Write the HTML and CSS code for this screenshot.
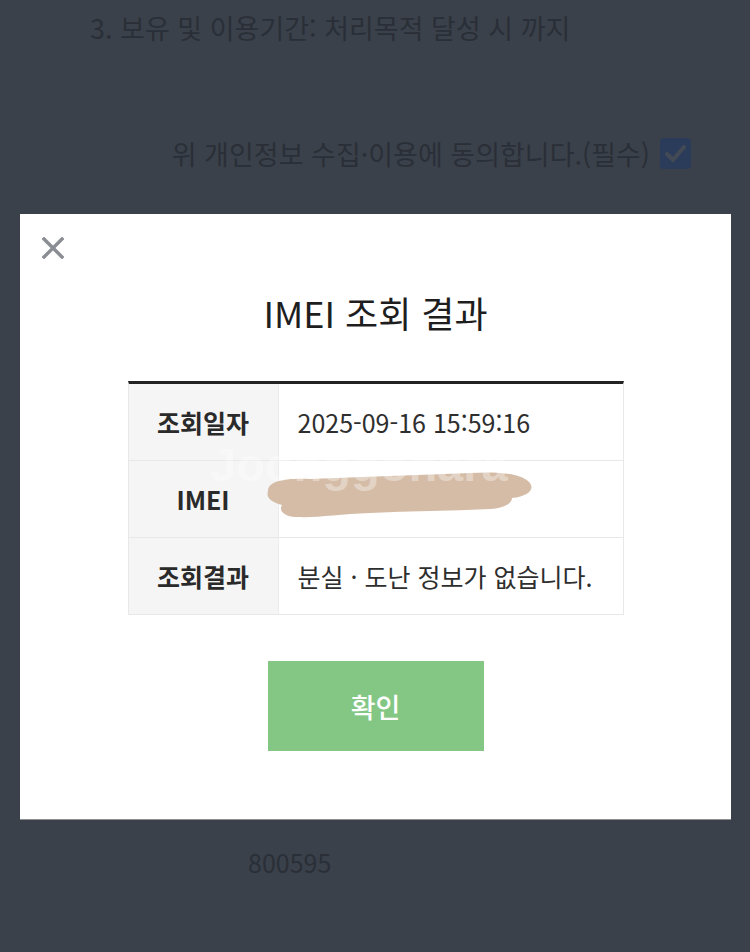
FILE: index.html
```html
<!DOCTYPE html>
<html lang="ko">
<head>
<meta charset="utf-8">
<title>IMEI 조회 결과</title>
<link rel="stylesheet" href="styles.css">
</head>
<body>
<div class="page">
  <p class="line1">3. 보유 및 이용기간: 처리목적 달성 시 까지</p>
  <div class="agree">
    <span>위 개인정보 수집·이용에 동의합니다.(필수)</span>
    <span class="check">
      <svg width="31" height="31" viewBox="0 0 31 31"><path d="M7 16 L13 22 L24 9" fill="none" stroke="#434a55" stroke-width="4" stroke-linecap="round" stroke-linejoin="round"/></svg>
    </span>
  </div>
  <p class="code">800595</p>
</div>

<div class="modal">
  <button class="close" aria-label="닫기">
    <svg width="22" height="22" viewBox="0 0 22 22"><path d="M2 2 L20 20 M20 2 L2 20" stroke="#8a8d92" stroke-width="3.4" stroke-linecap="square"/></svg>
  </button>
  <h1 class="title">IMEI 조회 결과</h1>
  <div class="result">
    <div class="label">조회일자</div>
    <div class="value">2025-09-16 15:59:16</div>
    <div class="label">IMEI</div>
    <div class="value imei"></div>
    <div class="label">조회결과</div>
    <div class="value">분실 · 도난 정보가 없습니다.</div>
  </div>
  <button class="ok">확인</button>
  <svg class="scribble" width="750" height="952" viewBox="0 0 750 952">
    <path d="M268,491 C268,481 285,478 310,479 C360,477 420,475 470,473 C500,471 520,474 528,481 C536,488 530,496 512,498 C512,503 505,508 490,509 C450,511 410,511 370,513 C340,514 315,518 298,517 C285,517 278,511 282,505 C270,502 266,497 268,491 Z" fill="#d5bca7"/>
  </svg>
  <span class="watermark">Joonggonara</span>
</div>
</body>
</html>
```

FILE: styles.css
```css
* { box-sizing: border-box; }
html, body { margin: 0; padding: 0; }
body {
  width: 750px;
  height: 952px;
  overflow: hidden;
  background: #3a414b;
  font-family: "Noto Sans CJK KR", "Noto Sans", sans-serif;
  position: relative;
}
.page {
  color: #2a2f37;
  font-size: 27px;
}
.line1 {
  margin: 0;
  padding-left: 90px;
  line-height: 56px;
}
.agree {
  margin-top: 69px;
  height: 56px;
  display: flex;
  justify-content: flex-end;
  align-items: center;
  gap: 10px;
  padding-right: 59px;
}
.check {
  width: 31px;
  height: 31px;
  border-radius: 4px;
  background: #2b3c5a;
  display: flex;
}
.code {
  margin: 663px 0 0;
  padding-left: 248px;
  font-size: 25px;
  line-height: 36px;
}
.modal {
  position: absolute;
  left: 20px;
  top: 214px;
  width: 711px;
  height: 605px;
  background: #fff;
  box-shadow: 0 1px 0 #8f8f8f;
  padding-top: 73px;
}
.close {
  position: absolute;
  left: 22px;
  top: 23px;
  width: 22px;
  height: 22px;
  padding: 0;
  border: 0;
  background: none;
  display: flex;
}
.title {
  margin: 0;
  text-align: center;
  font-size: 36px;
  font-weight: 400;
  line-height: 50px;
  color: #1e1e1e;
}
.result {
  width: 496px;
  margin: 44px auto 0;
  display: grid;
  grid-template-columns: 150px 1fr;
  border-top: 3px solid #222;
  border-left: 1px solid #e8e8e8;
  border-right: 1px solid #e8e8e8;
}
.label, .value {
  height: 77px;
  border-bottom: 1px solid #e8e8e8;
  display: flex;
  align-items: center;
  font-size: 25px;
  color: #2a2a2a;
}
.label {
  justify-content: center;
  background: #f5f5f5;
  font-weight: 700;
  border-right: 1px solid #ececec;
}
.value {
  padding-left: 19px;
  color: #2e2e2e;
}
.ok {
  display: block;
  width: 216px;
  height: 90px;
  margin: 46px auto 0;
  border: 0;
  background: #84c785;
  color: #fff;
  font-family: inherit;
  font-size: 27px;
  font-weight: 500;
}
.scribble {
  position: absolute;
  left: -20px;
  top: -214px;
  pointer-events: none;
}
.watermark {
  position: absolute;
  left: 190px;
  top: 226px;
  font-family: "Liberation Sans", Arial, sans-serif;
  font-weight: 700;
  font-size: 47px;
  line-height: 50px;
  color: rgba(255, 255, 255, 0.35);
  pointer-events: none;
}
```
